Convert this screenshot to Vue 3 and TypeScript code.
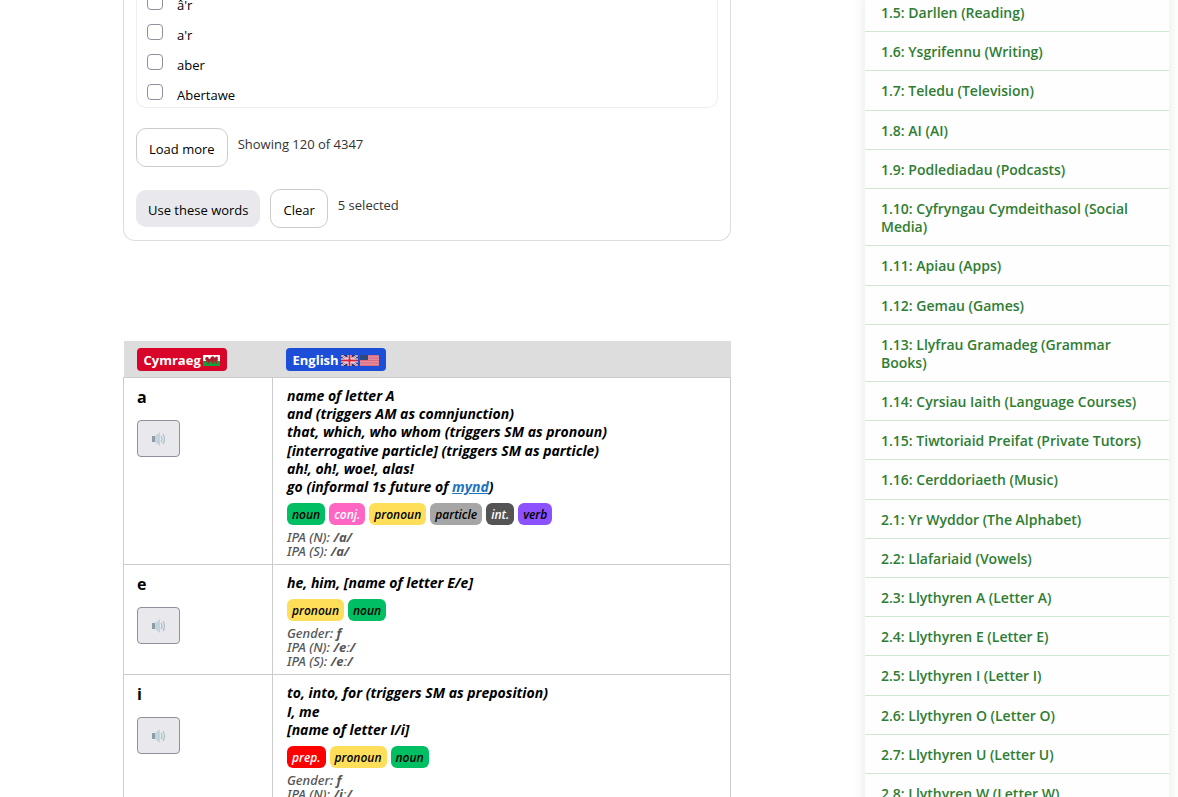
<script setup lang="ts">
import { ref } from 'vue'

interface Tag { label: string; kind: string }
interface Detail { label: string; value: string }
interface Entry { word: string; lines: string[]; link?: string; tags: Tag[]; details: Detail[] }

const words = ref([
  { text: "â'r", checked: false },
  { text: "a'r", checked: false },
  { text: 'aber', checked: false },
  { text: 'Abertawe', checked: false },
])

const entries: Entry[] = [
  {
    word: 'a',
    lines: [
      'name of letter A',
      'and (triggers AM as comnjunction)',
      'that, which, who whom (triggers SM as pronoun)',
      '[interrogative particle] (triggers SM as particle)',
      'ah!, oh!, woe!, alas!',
    ],
    link: 'mynd',
    tags: [
      { label: 'noun', kind: 'noun' },
      { label: 'conj.', kind: 'conj' },
      { label: 'pronoun', kind: 'pronoun' },
      { label: 'particle', kind: 'particle' },
      { label: 'int.', kind: 'int' },
      { label: 'verb', kind: 'verb' },
    ],
    details: [
      { label: 'IPA (N):', value: '/a/' },
      { label: 'IPA (S):', value: '/a/' },
    ],
  },
  {
    word: 'e',
    lines: ['he, him, [name of letter E/e]'],
    tags: [
      { label: 'pronoun', kind: 'pronoun' },
      { label: 'noun', kind: 'noun' },
    ],
    details: [
      { label: 'Gender:', value: 'f' },
      { label: 'IPA (N):', value: '/eː/' },
      { label: 'IPA (S):', value: '/eː/' },
    ],
  },
  {
    word: 'i',
    lines: ['to, into, for (triggers SM as preposition)', 'I, me', '[name of letter I/i]'],
    tags: [
      { label: 'prep.', kind: 'prep' },
      { label: 'pronoun', kind: 'pronoun' },
      { label: 'noun', kind: 'noun' },
    ],
    details: [
      { label: 'Gender:', value: 'f' },
      { label: 'IPA (N):', value: '/iː/' },
      { label: 'IPA (S):', value: '/iː/' },
    ],
  },
]

const lessons: string[] = [
  '1.5: Darllen (Reading)',
  '1.6: Ysgrifennu (Writing)',
  '1.7: Teledu (Television)',
  '1.8: AI (AI)',
  '1.9: Podlediadau (Podcasts)',
  '1.10: Cyfryngau Cymdeithasol (Social Media)',
  '1.11: Apiau (Apps)',
  '1.12: Gemau (Games)',
  '1.13: Llyfrau Gramadeg (Grammar Books)',
  '1.14: Cyrsiau Iaith (Language Courses)',
  '1.15: Tiwtoriaid Preifat (Private Tutors)',
  '1.16: Cerddoriaeth (Music)',
  '2.1: Yr Wyddor (The Alphabet)',
  '2.2: Llafariaid (Vowels)',
  '2.3: Llythyren A (Letter A)',
  '2.4: Llythyren E (Letter E)',
  '2.5: Llythyren I (Letter I)',
  '2.6: Llythyren O (Letter O)',
  '2.7: Llythyren U (Letter U)',
  '2.8: Llythyren W (Letter W)',
]
</script>

<template>
  <div class="page">
    <main class="content">
      <section class="picker">
        <ul class="words">
          <li v-for="w in words" :key="w.text">
            <label class="word"><input v-model="w.checked" type="checkbox" /><span>{{ w.text }}</span></label>
          </li>
        </ul>
        <div class="actions">
          <button type="button" class="btn">Load more</button>
          <span class="note">Showing 120 of 4347</span>
        </div>
        <div class="actions">
          <button type="button" class="btn filled">Use these words</button>
          <button type="button" class="btn">Clear</button>
          <span class="note">5 selected</span>
        </div>
      </section>

      <table class="dictionary">
        <thead>
          <tr>
            <th class="col-word">
              <span class="lang welsh">Cymraeg
                <svg class="flag" width="17" height="11" viewBox="0 0 17 11" aria-hidden="true">
                  <rect width="17" height="6" fill="#fff" />
                  <rect y="6" width="17" height="5" fill="#12a03c" />
                  <path d="M2 4l1-2 2 0 1 2 1 0 1-2 2-1 2 2 1-1.500 2 .5-.5 2 1 1-1.500 1 .5 2.500h-2l-.5-2h-1.500l.5 2h-2l-.5-2h-1.500l-1 2h-1.500l.5-2.500-1.500 1-1.500-.5 1.500-1.500-1.500-.5z" fill="#b3202e" />
                  <path d="M4 4l2 1.500M8 3.500l2 1.500M12 3l2 1" stroke="#6b1820" stroke-width=".7" />
                </svg>
              </span>
            </th>
            <th>
              <span class="lang english">English
                <svg class="flag" width="17" height="11" viewBox="0 0 17 11" aria-hidden="true">
                  <rect width="17" height="11" fill="#22336e" />
                  <path d="M0 0l17 11M17 0L0 11" stroke="#fff" stroke-width="2" />
                  <path d="M0 0l17 11M17 0L0 11" stroke="#d32540" stroke-width=".8" />
                  <path d="M8.500 0v11M0 5.500h17" stroke="#fff" stroke-width="4" />
                  <path d="M8.500 0v11M0 5.500h17" stroke="#d32540" stroke-width="2" />
                </svg>
                <svg class="flag" width="19" height="11" viewBox="0 0 19 11" aria-hidden="true">
                  <rect width="19" height="11" fill="#e58a9b" />
                  <path d="M0 .5h19M0 3h19M0 5.500h19M0 8h19M0 10.500h19" stroke="#d86b80" stroke-width="1" />
                  <rect width="8" height="5" fill="#2d4a78" />
                </svg>
              </span>
            </th>
          </tr>
        </thead>
        <tbody>
          <tr v-for="entry in entries" :key="entry.word">
            <td>
              <div class="headword">{{ entry.word }}</div>
              <button type="button" class="speak" :aria-label="`Listen to ${entry.word}`">
                <svg width="14" height="14" viewBox="0 0 14 14" aria-hidden="true">
                  <rect x="0" y="4" width="4" height="6" fill="#8d9ba5" />
                  <path d="M3 4l5-4v14l-5-4z" fill="#c3d3dc" />
                  <path d="M9 4q2 3 0 6M11 2q3 5 0 10" fill="none" stroke="#adbfc9" stroke-width="1.300" />
                </svg>
              </button>
            </td>
            <td>
              <div class="meaning">
                <div v-for="line in entry.lines" :key="line">{{ line }}</div>
                <div v-if="entry.link">go (informal 1s future of <a href="#mynd">{{ entry.link }}</a>)</div>
              </div>
              <div class="tags">
                <span v-for="tag in entry.tags" :key="tag.label" class="tag" :class="tag.kind">{{ tag.label }}</span>
              </div>
              <div class="details">
                <div v-for="d in entry.details" :key="d.label">{{ d.label }} <strong>{{ d.value }}</strong></div>
              </div>
            </td>
          </tr>
        </tbody>
      </table>
    </main>

    <nav class="lessons" aria-label="Lessons">
      <a v-for="lesson in lessons" :key="lesson" href="#lesson">{{ lesson }}</a>
    </nav>
  </div>
</template>

<style>
html,
body {
  height: 100%;
  overflow: hidden;
  background: #fff;
}
</style>

<style scoped>
.page {
  display: grid;
  grid-template-columns: minmax(0, 1fr) 304px;
  column-gap: 134px;
  align-items: start;
  padding: 0 9px 0 123px;
  font-family: 'Open Sans', 'Noto Sans', sans-serif;
  font-size: 13px;
  color: #000;
}

.picker {
  box-sizing: border-box;
  border: 1px solid #ddd;
  border-top: 0;
  border-radius: 0 0 12px 12px;
  padding: 0 12px 12px;
}

.words {
  list-style: none;
  margin: -13px 0 20px;
  padding: 0 10px;
  border: 1px solid #eee;
  border-top: 0;
  border-radius: 0 0 10px 10px;
  display: grid;
  grid-auto-rows: 30px;
}

.word {
  display: flex;
  align-items: center;
  gap: 14px;
  height: 30px;
}

.word input {
  appearance: none;
  box-sizing: border-box;
  width: 16px;
  height: 16px;
  margin: 0;
  border: 1px solid #8f8f9d;
  border-radius: 4px;
  background: #fff;
}

.word span {
  padding-top: 5px;
}

.actions {
  display: flex;
  align-items: center;
  gap: 10px;
}

.actions + .actions {
  margin-top: 22px;
}

.btn {
  font: inherit;
  line-height: 18px;
  color: #000;
  background: #fff;
  border: 1px solid #ccc;
  border-radius: 10px;
  padding: 11px 12px 8px;
}

.btn.filled {
  background: #e9e9ed;
  border: 0;
}

.note {
  color: #333;
  padding-bottom: 8px;
}

.dictionary {
  width: 100%;
  margin-top: 100px;
  border-collapse: collapse;
  table-layout: fixed;
}

.dictionary th {
  background: #ddd;
  text-align: left;
  padding: 7px 13px 6px;
  line-height: 23px;
}

.col-word {
  width: 123px;
}

.dictionary td {
  border: 1px solid #ccc;
  padding: 9px 13px 6px;
  vertical-align: top;
}

.dictionary td + td {
  padding-left: 14px;
}

.lang {
  box-sizing: border-box;
  display: inline-flex;
  align-items: center;
  gap: 2px;
  height: 23px;
  padding: 2px 7px 0;
  border-radius: 4px;
  color: #fff;
  font-weight: 700;
  vertical-align: top;
}

.welsh {
  background: #d90429;
}

.english {
  background: #1d4ed8;
}

.headword {
  font-size: 16px;
  font-weight: 700;
  line-height: 20px;
}

.speak {
  display: flex;
  align-items: center;
  justify-content: center;
  width: 43px;
  height: 37px;
  margin-top: 13px;
  padding: 0;
  background: #e9e9ed;
  border: 1px solid #8f8f9d;
  border-radius: 4px;
}

.meaning {
  font-size: 14px;
  font-weight: 700;
  font-style: italic;
  line-height: 1.3;
}

.meaning a {
  color: #1e73be;
}

.tags {
  display: flex;
  gap: 4px;
  margin: 7px 0 5px;
}

.tag {
  height: 22px;
  line-height: 24px;
  padding: 0 5px;
  border-radius: 6px;
  font-size: 12px;
  font-weight: 600;
  font-style: italic;
}

.noun {
  background: #00bf63;
}

.conj {
  background: #ff66c4;
  color: #fff;
}

.pronoun {
  background: #ffde59;
}

.particle {
  background: #a6a6a6;
}

.int {
  background: #545454;
  color: #fff;
}

.verb {
  background: #8c52ff;
}

.prep {
  background: #f00;
  color: #fff;
}

.details {
  color: #555;
  font-family: 'Noto Sans', sans-serif;
  font-weight: 500;
  font-style: italic;
  line-height: 14px;
}

.lessons {
  display: flex;
  flex-direction: column;
  margin-top: -7px;
  background: #fefefe;
  box-shadow: 0 0 12px rgba(46, 125, 50, 0.15);
}

.lessons a {
  padding: 11px 16px 9px;
  border-bottom: 1px solid #d0e8d0;
  color: #2e7d32;
  font-size: 14px;
  font-weight: 600;
  line-height: 1.3;
  text-decoration: none;
}
</style>
